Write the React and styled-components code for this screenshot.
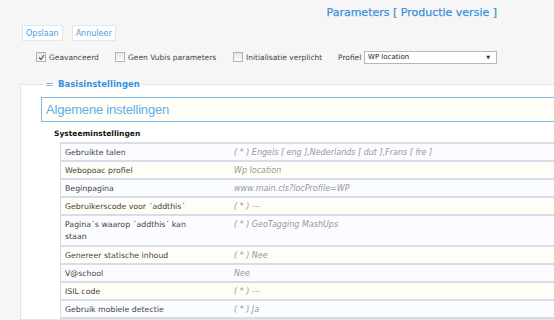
import React from 'react';
import styled, { createGlobalStyle } from 'styled-components';

const GlobalStyle = createGlobalStyle`
  html, body {
    margin: 0;
    padding: 0;
    background: #f6f6f6;
    overflow: hidden;
  }

  body {
    font-family: 'DejaVu Sans', Verdana, sans-serif;
    color: #333;
  }
`;

const Page = styled.div`
  width: 554px;
  height: 320px;
  overflow: hidden;
`;

const TitleBar = styled.div`
  display: flex;
  justify-content: flex-end;
  padding: 6px 57px 0 0;
  height: 17px;
`;

const Title = styled.h1`
  margin: 0;
  font-size: 11px;
  font-weight: normal;
  color: #3a90dc;
  -webkit-text-stroke: 0.25px #3a90dc;
`;

const Toolbar = styled.div`
  display: flex;
  gap: 9px;
  padding: 2px 0 0 22px;
`;

const Button = styled.button`
  background: #fff;
  border: 1px solid #dfe6ee;
  color: #4a9be0;
  font-family: inherit;
  font-size: 8px;
  padding: 0 3px;
  height: 16px;
  cursor: pointer;
`;

const Options = styled.div`
  display: flex;
  align-items: center;
  padding: 9px 0 0 36px;
  font-size: 7.5px;
  color: #444;
  height: 14px;
`;

const CheckLabel = styled.label`
  display: flex;
  align-items: center;
  gap: 3px;
  width: ${p => p.$width}px;
  white-space: nowrap;
`;

const Box = styled.span`
  display: inline-flex;
  align-items: center;
  justify-content: center;
  width: 8px;
  height: 8px;
  border: 1px solid #b4b4b4;
  background: linear-gradient(#e4e4e4, #fdfdfd);
`;

const ProfileLabel = styled.span`
  width: 26px;
`;

const Select = styled.div`
  display: flex;
  align-items: center;
  justify-content: space-between;
  box-sizing: border-box;
  width: 133px;
  height: 13px;
  padding: 0 6px 0 3px;
  background: #fff;
  border: 1px solid #b8b8b8;
  font-size: 7px;
  color: #222;

  span {
    font-size: 5px;
    color: #333;
  }
`;

const Fieldset = styled.fieldset`
  margin: 15px 0 0 20px;
  padding: 8px 0 0 20px;
  width: 620px;
  border: 1px solid #e4e4e4;
  border-right: none;
  background: #fff;
`;

const Legend = styled.legend`
  display: flex;
  align-items: center;
  gap: 5px;
  padding: 0 2px;
  margin-left: 3px;
  font-size: 8.5px;
  font-weight: bold;
  color: #3a90dc;
`;

const Collapse = styled.span`
  width: 7px;
  height: 1px;
  border-top: 1px solid #8cbce6;
  border-bottom: 1px solid #8cbce6;
`;

const SectionHead = styled.div`
  height: 23px;
  display: flex;
  align-items: center;
  padding-left: 4px;
  border: 1px solid #7bbbe5;
  background: #fffff8;
  font-family: 'Liberation Sans', Arial, sans-serif;
  font-size: 13px;
  letter-spacing: -0.2px;
  color: #5cb0ee;
`;

const Group = styled.div`
  padding: 7px 0 0 13px;
`;

const GroupTitle = styled.div`
  font-size: 7.5px;
  font-weight: bold;
  color: #111;
  height: 10px;
  margin-bottom: 3px;
`;

const Table = styled.div`
  margin-left: 6px;
  border-left: 1px solid #d8dde6;
  border-top: 2px solid #d5dde8;
`;

const Row = styled.div`
  display: grid;
  grid-template-columns: 170px 1fr;
  align-items: start;
  height: ${p => (p.$tall ? 29 : 16)}px;
  border-bottom: 2px solid #d5dde8;
  background: ${p => (p.$alt ? '#fffef6' : '#fbfcff')};
`;

const Label = styled.div`
  font-size: 7.8px;
  color: #444;
  padding: 3px 0 0 4px;
  line-height: 12px;
  max-width: ${p => (p.$wrap ? '130px' : 'none')};
`;

const Value = styled.div`
  font-size: 8px;
  font-style: italic;
  color: #979797;
  padding: 3px 0 0 3px;
  line-height: 12px;
`;

const Check = () => (
  <svg width="7" height="7" viewBox="0 0 7 7">
    <path d="M1 3.5 L3 5.5 L6 1" fill="none" stroke="#4a5a80" strokeWidth="1.2" />
  </svg>
);

const rows = [
  ['Gebruikte talen', '( * ) Engels [ eng ],Nederlands [ dut ],Frans [ fre ]'],
  ['Webopoac profiel', 'Wp location'],
  ['Beginpagina', 'www.main.cls?locProfile=WP'],
  ['Gebruikerscode voor ´addthis´', '( * ) ---'],
  ['Pagina´s waarop ´addthis´ kan staan', '( * ) GeoTagging MashUps', true],
  ['Genereer statische inhoud', '( * ) Nee'],
  ['V@school', 'Nee'],
  ['ISIL code', '( * ) ---'],
  ['Gebruik mobiele detectie', '( * ) Ja'],
];

export default function App() {
  return (
    <Page>
      <GlobalStyle />
      <TitleBar>
        <Title>Parameters [ Productie versie ]</Title>
      </TitleBar>
      <Toolbar>
        <Button>Opslaan</Button>
        <Button>Annuleer</Button>
      </Toolbar>
      <Options>
        <CheckLabel $width={79}>
          <Box><Check /></Box>
          Geavanceerd
        </CheckLabel>
        <CheckLabel $width={118}>
          <Box />
          Geen Vubis parameters
        </CheckLabel>
        <CheckLabel $width={105}>
          <Box />
          Initialisatie verplicht
        </CheckLabel>
        <ProfileLabel>Profiel</ProfileLabel>
        <Select>
          WP location
          <span>▼</span>
        </Select>
      </Options>
      <Fieldset>
        <Legend>
          <Collapse />
          Basisinstellingen
        </Legend>
        <SectionHead>Algemene instellingen</SectionHead>
        <Group>
          <GroupTitle>Systeeminstellingen</GroupTitle>
          <Table>
            {rows.map(([label, value, tall], i) => (
              <Row key={label} $tall={tall} $alt={i % 2 === 1}>
                <Label $wrap={tall}>{label}</Label>
                <Value>{value}</Value>
              </Row>
            ))}
          </Table>
        </Group>
      </Fieldset>
    </Page>
  );
}
